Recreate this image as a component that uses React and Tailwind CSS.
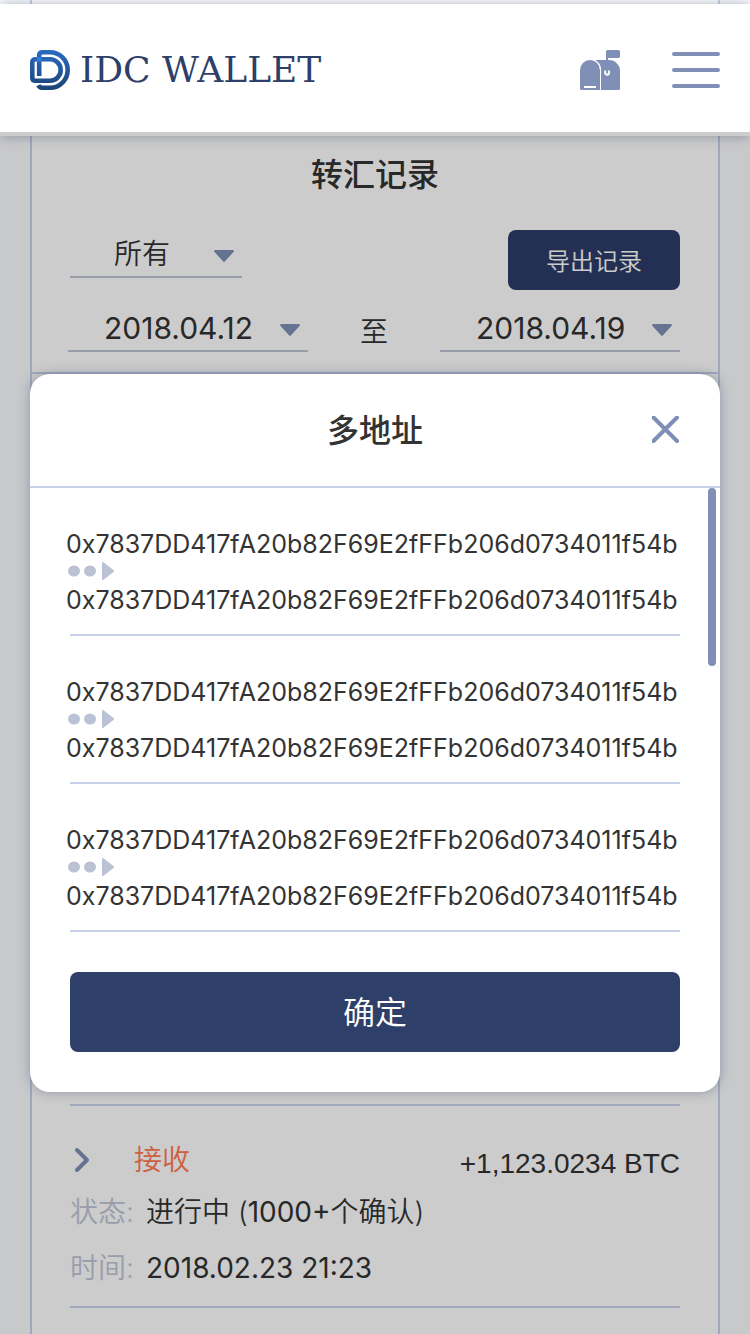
import React from "react";

const ADDRESS = "0x7837DD417fA20b82F69E2fFFb206d0734011f54b";
const transfers = [
  { id: 1, from: ADDRESS, to: ADDRESS },
  { id: 2, from: ADDRESS, to: ADDRESS },
  { id: 3, from: ADDRESS, to: ADDRESS },
];

function Logo() {
  return (
    <svg className="h-10 w-10 shrink-0" viewBox="0 0 40 40" fill="none" aria-hidden="true">
      <defs>
        <linearGradient id="logoBlue" x1="0" y1="0" x2="0" y2="40" gradientUnits="userSpaceOnUse">
          <stop offset="0" stopColor="#2a6bc4" />
          <stop offset="1" stopColor="#1a4474" />
        </linearGradient>
      </defs>
      <path
        d="M9.200 26V5.500Q9.200 2.300 12.400 2.300H20A17.700 17.700 0 0 1 20 37.700H12Q9.500 37.700 8.300 35.300"
        stroke="url(#logoBlue)"
        strokeWidth="4.600"
      />
      <path
        d="M5.500 9.300H20A10.700 10.700 0 0 1 20 30.700H5.500Q2.300 30.700 2.300 27.500V12.500Q2.300 9.300 5.500 9.300Z"
        stroke="url(#logoBlue)"
        strokeWidth="4.600"
      />
      <path d="M6.900 7H11.500V11.600H6.900Z" fill="#3378dc" />
    </svg>
  );
}

function MailboxIcon() {
  return (
    <svg className="h-10 w-10" viewBox="0 0 40 40" aria-hidden="true">
      <path d="M27.500 0H38.500Q40 0 40 1.500V6.500Q40 8 38.500 8H28V12H26V1.500Q26 0 27.500 0Z" fill="#7f8fb6" />
      <path d="M14 10H29A11 11 0 0 1 40 21V38.500Q40 40 38.500 40H21V20Q20.500 12.500 14 10Z" fill="#7f8fb6" />
      <path d="M0 20A10 10 0 0 1 20 20V40H1.500Q0 40 0 38.500Z" fill="#7f8fb6" />
      <path d="M13.500 9.800Q20.500 12 20.500 20V40" stroke="#fff" strokeWidth="1" fill="none" />
      <path d="M25.200 20.500V22.500A1.900 2.200 0 0 0 29 22.500V20.500" stroke="#fff" strokeWidth="2" fill="none" />
      <path d="M4 36H16V38H4Z" fill="#fff" />
    </svg>
  );
}

function Picker({ label, value, className, textClass }) {
  return (
    <div className={"relative h-12 border-b-2 border-[#bcc3d3] " + className}>
      <select
        aria-label={label}
        defaultValue={value}
        className={"h-full w-full appearance-none bg-transparent pt-0.5 text-[#333] " + textClass}
      >
        <option>{value}</option>
      </select>
      <svg
        className="pointer-events-none absolute top-5 right-2 h-3 w-5"
        viewBox="0 0 20 12"
        aria-hidden="true"
      >
        <path d="M1 0H19Q20.500 0.500 19.500 2L11 11.300Q10 12.300 9 11.300L0.500 2Q-0.500 0.500 1 0Z" fill="#7f8fb6" />
      </svg>
    </div>
  );
}

function TransferRow({ from, to }) {
  return (
    <li>
      <div className="px-9 pt-[42px] pb-5 text-[25px] leading-7 whitespace-nowrap text-[#333]">
        <p>{from}</p>
        <svg className="h-7 w-12" viewBox="0 0 48 28" fill="#bcc2d5" role="img" aria-label="转至">
          <ellipse cx="8" cy="13" rx="6" ry="5.500" />
          <ellipse cx="24" cy="13" rx="6" ry="5.500" />
          <path d="M36 5Q36 3.500 37.500 4.200L47.500 12Q48.500 13 47.500 14L37.500 21.800Q36 22.500 36 21Z" />
        </svg>
        <p>{to}</p>
      </div>
      <div className="mx-10 h-0.5 bg-[#c8d2ea]" />
    </li>
  );
}

export default function App() {
  return (
    <div className="relative flex min-h-screen flex-col overflow-hidden bg-[#fbfcfe] font-['Inter','Noto_Sans_CJK_SC',sans-serif] text-[#333]">
      <div className="mx-[30px] h-1 border-x-2 border-[#c8d2ea] bg-white" />
      <header className="relative flex h-[132px] items-center justify-between bg-white px-[30px] shadow-[0_0_12px_rgba(60,70,110,0.4)]">
        <a href="#home" className="flex items-center gap-2.5 text-[#2e3f6a]">
          <Logo />
          <span className="font-['DejaVu_Serif',serif] text-4xl leading-10 whitespace-nowrap">IDC WALLET</span>
        </a>
        <div className="flex items-center gap-[52px]">
          <button type="button" aria-label="信箱">
            <MailboxIcon />
          </button>
          <button type="button" aria-label="菜单" className="flex w-12 flex-col gap-3">
            <span className="h-1 w-full rounded-full bg-[#7f8fb6]" />
            <span className="h-1 w-full rounded-full bg-[#7f8fb6]" />
            <span className="h-1 w-full rounded-full bg-[#7f8fb6]" />
          </button>
        </div>
      </header>

      <main className="mx-[30px] flex-1 border-x-2 border-[#c8d2ea] bg-white">
        <section className="border-b-2 border-[#c8d2ea] pt-4 pb-5">
          <h1 className="text-center text-[32px] leading-[46px] font-medium">转汇记录</h1>
          <div className="mt-8 flex items-start justify-between px-[38px]">
            <Picker label="类型" value="所有" className="w-[172px]" textClass="pl-11 text-[28px] font-[350]" />
            <button
              type="button"
              className="h-[60px] w-[172px] rounded-lg bg-[#2d3d68] pt-1 text-2xl font-[350] text-white"
            >
              导出记录
            </button>
          </div>
          <div className="mt-3.5 flex items-center justify-between pr-[38px] pl-9">
            <Picker label="开始日期" value="2018.04.12" className="w-60" textClass="pl-9 text-[30px]" />
            <span className="pt-2 text-[28px] leading-10 font-[350]">至</span>
            <Picker label="结束日期" value="2018.04.19" className="w-60" textClass="pl-9 text-[30px]" />
          </div>
        </section>

        <section className="px-[38px]">
          <div className="h-[732px] border-b-2 border-[#c8d2ea]" />
          <article className="border-b-2 border-[#c8d2ea] pt-[30px] pb-2.5 text-[28px]">
            <div className="flex items-center justify-between">
              <div className="flex items-center gap-[44px]">
                <svg className="h-7 w-5" viewBox="0 0 20 28" fill="none" aria-hidden="true">
                  <path d="M7 4L17 14L7 24" stroke="#7f8fb6" strokeWidth="4" strokeLinecap="round" strokeLinejoin="round" />
                </svg>
                <h2 className="leading-[48px] font-[350] text-[#ff7850]">接收</h2>
              </div>
              <p className="pt-2 font-['Liberation_Sans',sans-serif] leading-10">+1,123.0234 BTC</p>
            </div>
            <dl className="grid grid-cols-[76px_1fr] leading-[56px] whitespace-nowrap">
              <dt className="font-[350] text-[#c0c5d6]">状态:</dt>
              <dd className="font-[350]">
                进行中 (<span className="font-normal">1000+</span>个确认)
              </dd>
              <dt className="font-[350] text-[#c0c5d6]">时间:</dt>
              <dd>2018.02.23 21:23</dd>
            </dl>
          </article>
        </section>
      </main>

      <div className="absolute inset-x-0 top-[132px] bottom-0 bg-black/20 px-[30px] pt-[242px]">
        <div
          role="dialog"
          aria-modal="true"
          aria-labelledby="dialog-title"
          className="relative rounded-[20px] bg-white pb-10 shadow-[0_0_12px_rgba(60,70,110,0.4)]"
        >
          <div className="grid h-[114px] grid-cols-[1fr_auto_1fr] items-center border-b-2 border-[#c8d2ea] px-10">
            <h2 id="dialog-title" className="col-start-2 pt-0.5 text-[32px] font-medium">
              多地址
            </h2>
            <button type="button" aria-label="关闭" className="justify-self-end">
              <svg className="h-7 w-7" viewBox="0 0 28 28" aria-hidden="true">
                <path d="M1.500 1.500L25 25M25 1.500L1.500 25" stroke="#7f8fb6" strokeWidth="4" strokeLinecap="round" />
              </svg>
            </button>
          </div>
          <div className="relative">
            <ul>
              {transfers.map((t) => (
                <TransferRow key={t.id} from={t.from} to={t.to} />
              ))}
            </ul>
            <div className="absolute top-0 right-1 h-[178px] w-2 rounded-full bg-[#7f8fb6]" />
          </div>
          <div className="px-10 pt-10">
            <button
              type="button"
              className="h-20 w-full rounded-lg bg-[#2e3f6a] pt-0.5 text-[32px] font-[350] text-white"
            >
              确定
            </button>
          </div>
        </div>
      </div>
    </div>
  );
}
